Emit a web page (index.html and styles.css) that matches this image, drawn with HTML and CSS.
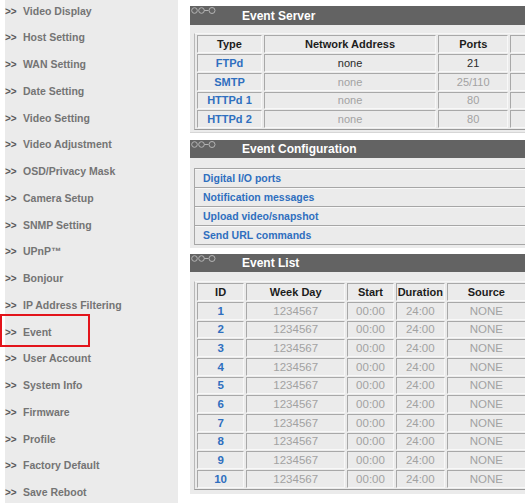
FILE: index.html
```html
<!DOCTYPE html>
<html>
<head>
<meta charset="utf-8">
<link rel="stylesheet" href="styles.css">
</head>
<body>
<div class="page">
  <nav class="side">
    <ul class="menu">
      <li><span class="arr">&gt;&gt;</span>Video Display</li>
      <li><span class="arr">&gt;&gt;</span>Host Setting</li>
      <li><span class="arr">&gt;&gt;</span>WAN Setting</li>
      <li><span class="arr">&gt;&gt;</span>Date Setting</li>
      <li><span class="arr">&gt;&gt;</span>Video Setting</li>
      <li><span class="arr">&gt;&gt;</span>Video Adjustment</li>
      <li><span class="arr">&gt;&gt;</span>OSD/Privacy Mask</li>
      <li><span class="arr">&gt;&gt;</span>Camera Setup</li>
      <li><span class="arr">&gt;&gt;</span>SNMP Setting</li>
      <li><span class="arr">&gt;&gt;</span>UPnP™</li>
      <li><span class="arr">&gt;&gt;</span>Bonjour</li>
      <li><span class="arr">&gt;&gt;</span>IP Address Filtering</li>
      <li class="active"><span class="arr">&gt;&gt;</span>Event<span class="mark"></span></li>
      <li><span class="arr">&gt;&gt;</span>User Account</li>
      <li><span class="arr">&gt;&gt;</span>System Info</li>
      <li><span class="arr">&gt;&gt;</span>Firmware</li>
      <li><span class="arr">&gt;&gt;</span>Profile</li>
      <li><span class="arr">&gt;&gt;</span>Factory Default</li>
      <li><span class="arr">&gt;&gt;</span>Save Reboot</li>
    </ul>
  </nav>
  <main class="main">
    <section class="sec s1">
      <div class="bar">
        <svg class="ico" width="26" height="10" viewBox="0 0 26 10"><circle cx="3.5" cy="4.5" r="2.8"/><circle cx="10.5" cy="4.5" r="2.8"/><line x1="13.3" y1="4.5" x2="17.5" y2="4.5"/><circle cx="21" cy="4.5" r="3"/></svg>
        <span class="title">Event Server</span>
      </div>
      <div class="panel p1">
        <table class="grid srv">
          <colgroup><col style="width:66px"><col style="width:177px"><col style="width:72px"><col style="width:60px"></colgroup>
          <tr><th>Type</th><th>Network Address</th><th>Ports</th><th></th></tr>
          <tr><td class="lnk">FTPd</td><td class="dk">none</td><td class="dk">21</td><td></td></tr>
          <tr><td class="lnk">SMTP</td><td>none</td><td>25/110</td><td></td></tr>
          <tr><td class="lnk">HTTPd 1</td><td>none</td><td>80</td><td></td></tr>
          <tr><td class="lnk">HTTPd 2</td><td>none</td><td>80</td><td></td></tr>
        </table>
      </div>
    </section>
    <section class="sec s2">
      <div class="bar b18">
        <svg class="ico" width="26" height="10" viewBox="0 0 26 10"><circle cx="3.5" cy="4.5" r="2.8"/><circle cx="10.5" cy="4.5" r="2.8"/><line x1="13.3" y1="4.5" x2="17.5" y2="4.5"/><circle cx="21" cy="4.5" r="3"/></svg>
        <span class="title">Event Configuration</span>
      </div>
      <div class="panel p2">
        <ul class="cfg">
          <li>Digital I/O ports</li>
          <li>Notification messages</li>
          <li>Upload video/snapshot</li>
          <li>Send URL commands</li>
        </ul>
      </div>
    </section>
    <section class="sec s3">
      <div class="bar b18">
        <svg class="ico" width="26" height="10" viewBox="0 0 26 10"><circle cx="3.5" cy="4.5" r="2.8"/><circle cx="10.5" cy="4.5" r="2.8"/><line x1="13.3" y1="4.5" x2="17.5" y2="4.5"/><circle cx="21" cy="4.5" r="3"/></svg>
        <span class="title">Event List</span>
      </div>
      <div class="panel p3">
        <table class="grid evl">
          <colgroup><col style="width:48px"><col style="width:100px"><col style="width:47px"><col style="width:49px"><col style="width:80px"><col style="width:40px"></colgroup>
          <tr><th>ID</th><th>Week Day</th><th>Start</th><th>Duration</th><th>Source</th><th></th></tr>
          <tr><td class="lnk">1</td><td>1234567</td><td>00:00</td><td>24:00</td><td>NONE</td><td></td></tr>
          <tr><td class="lnk">2</td><td>1234567</td><td>00:00</td><td>24:00</td><td>NONE</td><td></td></tr>
          <tr><td class="lnk">3</td><td>1234567</td><td>00:00</td><td>24:00</td><td>NONE</td><td></td></tr>
          <tr><td class="lnk">4</td><td>1234567</td><td>00:00</td><td>24:00</td><td>NONE</td><td></td></tr>
          <tr><td class="lnk">5</td><td>1234567</td><td>00:00</td><td>24:00</td><td>NONE</td><td></td></tr>
          <tr><td class="lnk">6</td><td>1234567</td><td>00:00</td><td>24:00</td><td>NONE</td><td></td></tr>
          <tr><td class="lnk">7</td><td>1234567</td><td>00:00</td><td>24:00</td><td>NONE</td><td></td></tr>
          <tr><td class="lnk">8</td><td>1234567</td><td>00:00</td><td>24:00</td><td>NONE</td><td></td></tr>
          <tr><td class="lnk">9</td><td>1234567</td><td>00:00</td><td>24:00</td><td>NONE</td><td></td></tr>
          <tr><td class="lnk">10</td><td>1234567</td><td>00:00</td><td>24:00</td><td>NONE</td><td></td></tr>
        </table>
      </div>
    </section>
  </main>
</div>
</body>
</html>
```

FILE: styles.css
```css
html, body {
  margin: 0;
  padding: 0;
  background: #fff;
  overflow: hidden;
}
body {
  font-family: "Liberation Sans", Arial, sans-serif;
  font-size: 11px;
}
.page {
  display: flex;
  width: 525px;
  height: 503px;
  overflow: hidden;
}
.side {
  flex: 0 0 173px;
  margin-left: 5px;
  background: #ebebeb;
}
.menu {
  list-style: none;
  margin: -2.4px 0 0 0;
  padding: 0;
}
.menu li {
  position: relative;
  height: 26.75px;
  line-height: 26.75px;
  color: #747474;
  font-weight: bold;
  font-size: 10.5px;
  white-space: nowrap;
}
.arr {
  display: inline-block;
  width: 18px;
  color: #5a5a5a;
  font-size: 10px;
}
.mark {
  position: absolute;
  left: -5px;
  top: -5px;
  width: 86px;
  height: 29px;
  border: 2px solid #e3141b;
}
.main {
  flex: 0 0 auto;
  width: 380px;
  margin-left: 12px;
  padding-top: 6px;
}
.s1 { margin-bottom: 7px; }
.s2 { margin-bottom: 6px; }
.bar {
  position: relative;
  height: 19px;
  background: #636363;
  display: flex;
  align-items: center;
}
.bar.b18 { height: 18px; }
.ico {
  position: absolute;
  left: 1px;
  top: 0;
  fill: none;
  stroke: #b4b4b4;
  stroke-width: 1;
}
.title {
  margin-left: 52px;
  color: #fff;
  font-weight: bold;
  font-size: 12px;
}
.panel {
  background: #ebebeb;
  padding-left: 4px;
}
.p1 { padding-top: 8px; padding-bottom: 2px; border-bottom: 1px solid #d6d6d6; }
.p2 { padding-top: 10px; padding-bottom: 3px; }
.p3 { padding-top: 9px; padding-bottom: 4px; }
.grid {
  table-layout: fixed;
  border-collapse: separate;
  border-spacing: 2px 1px;
  border: 1px solid;
  border-color: #f6f6f6 #9a9a9a #9a9a9a #b8b8b8;
  text-align: center;
}
.grid th, .grid td {
  border: 1px solid;
  border-color: #a8a8a8 #f8f8f8 #f8f8f8 #a8a8a8;
  padding: 0;
  overflow: hidden;
  white-space: nowrap;
  line-height: 12px;
}
.grid th {
  height: 16px;
  color: #1c1c1c;
  font-weight: bold;
  font-size: 11px;
}
.grid td {
  height: 15.75px;
  color: #a2a2a2;
  font-size: 11px;
}
.evl td { height: 15.67px; font-size: 11.5px; }
.grid td.lnk {
  color: #2f6fbf;
  font-weight: bold;
}
.grid td.dk {
  color: #2a2a2a;
}
.cfg {
  list-style: none;
  margin: 0;
  padding: 0;
  border-left: 1px solid #a8a8a8;
}
.cfg li {
  height: 18px;
  line-height: 18px;
  border-top: 1px solid #a6a6a6;
  box-shadow: inset 0 1px 0 #f8f8f8;
  padding-left: 8px;
  color: #2f6fbf;
  font-weight: bold;
  font-size: 10.5px;
}
.cfg li:last-child {
  border-bottom: 1px solid #a6a6a6;
}
```
